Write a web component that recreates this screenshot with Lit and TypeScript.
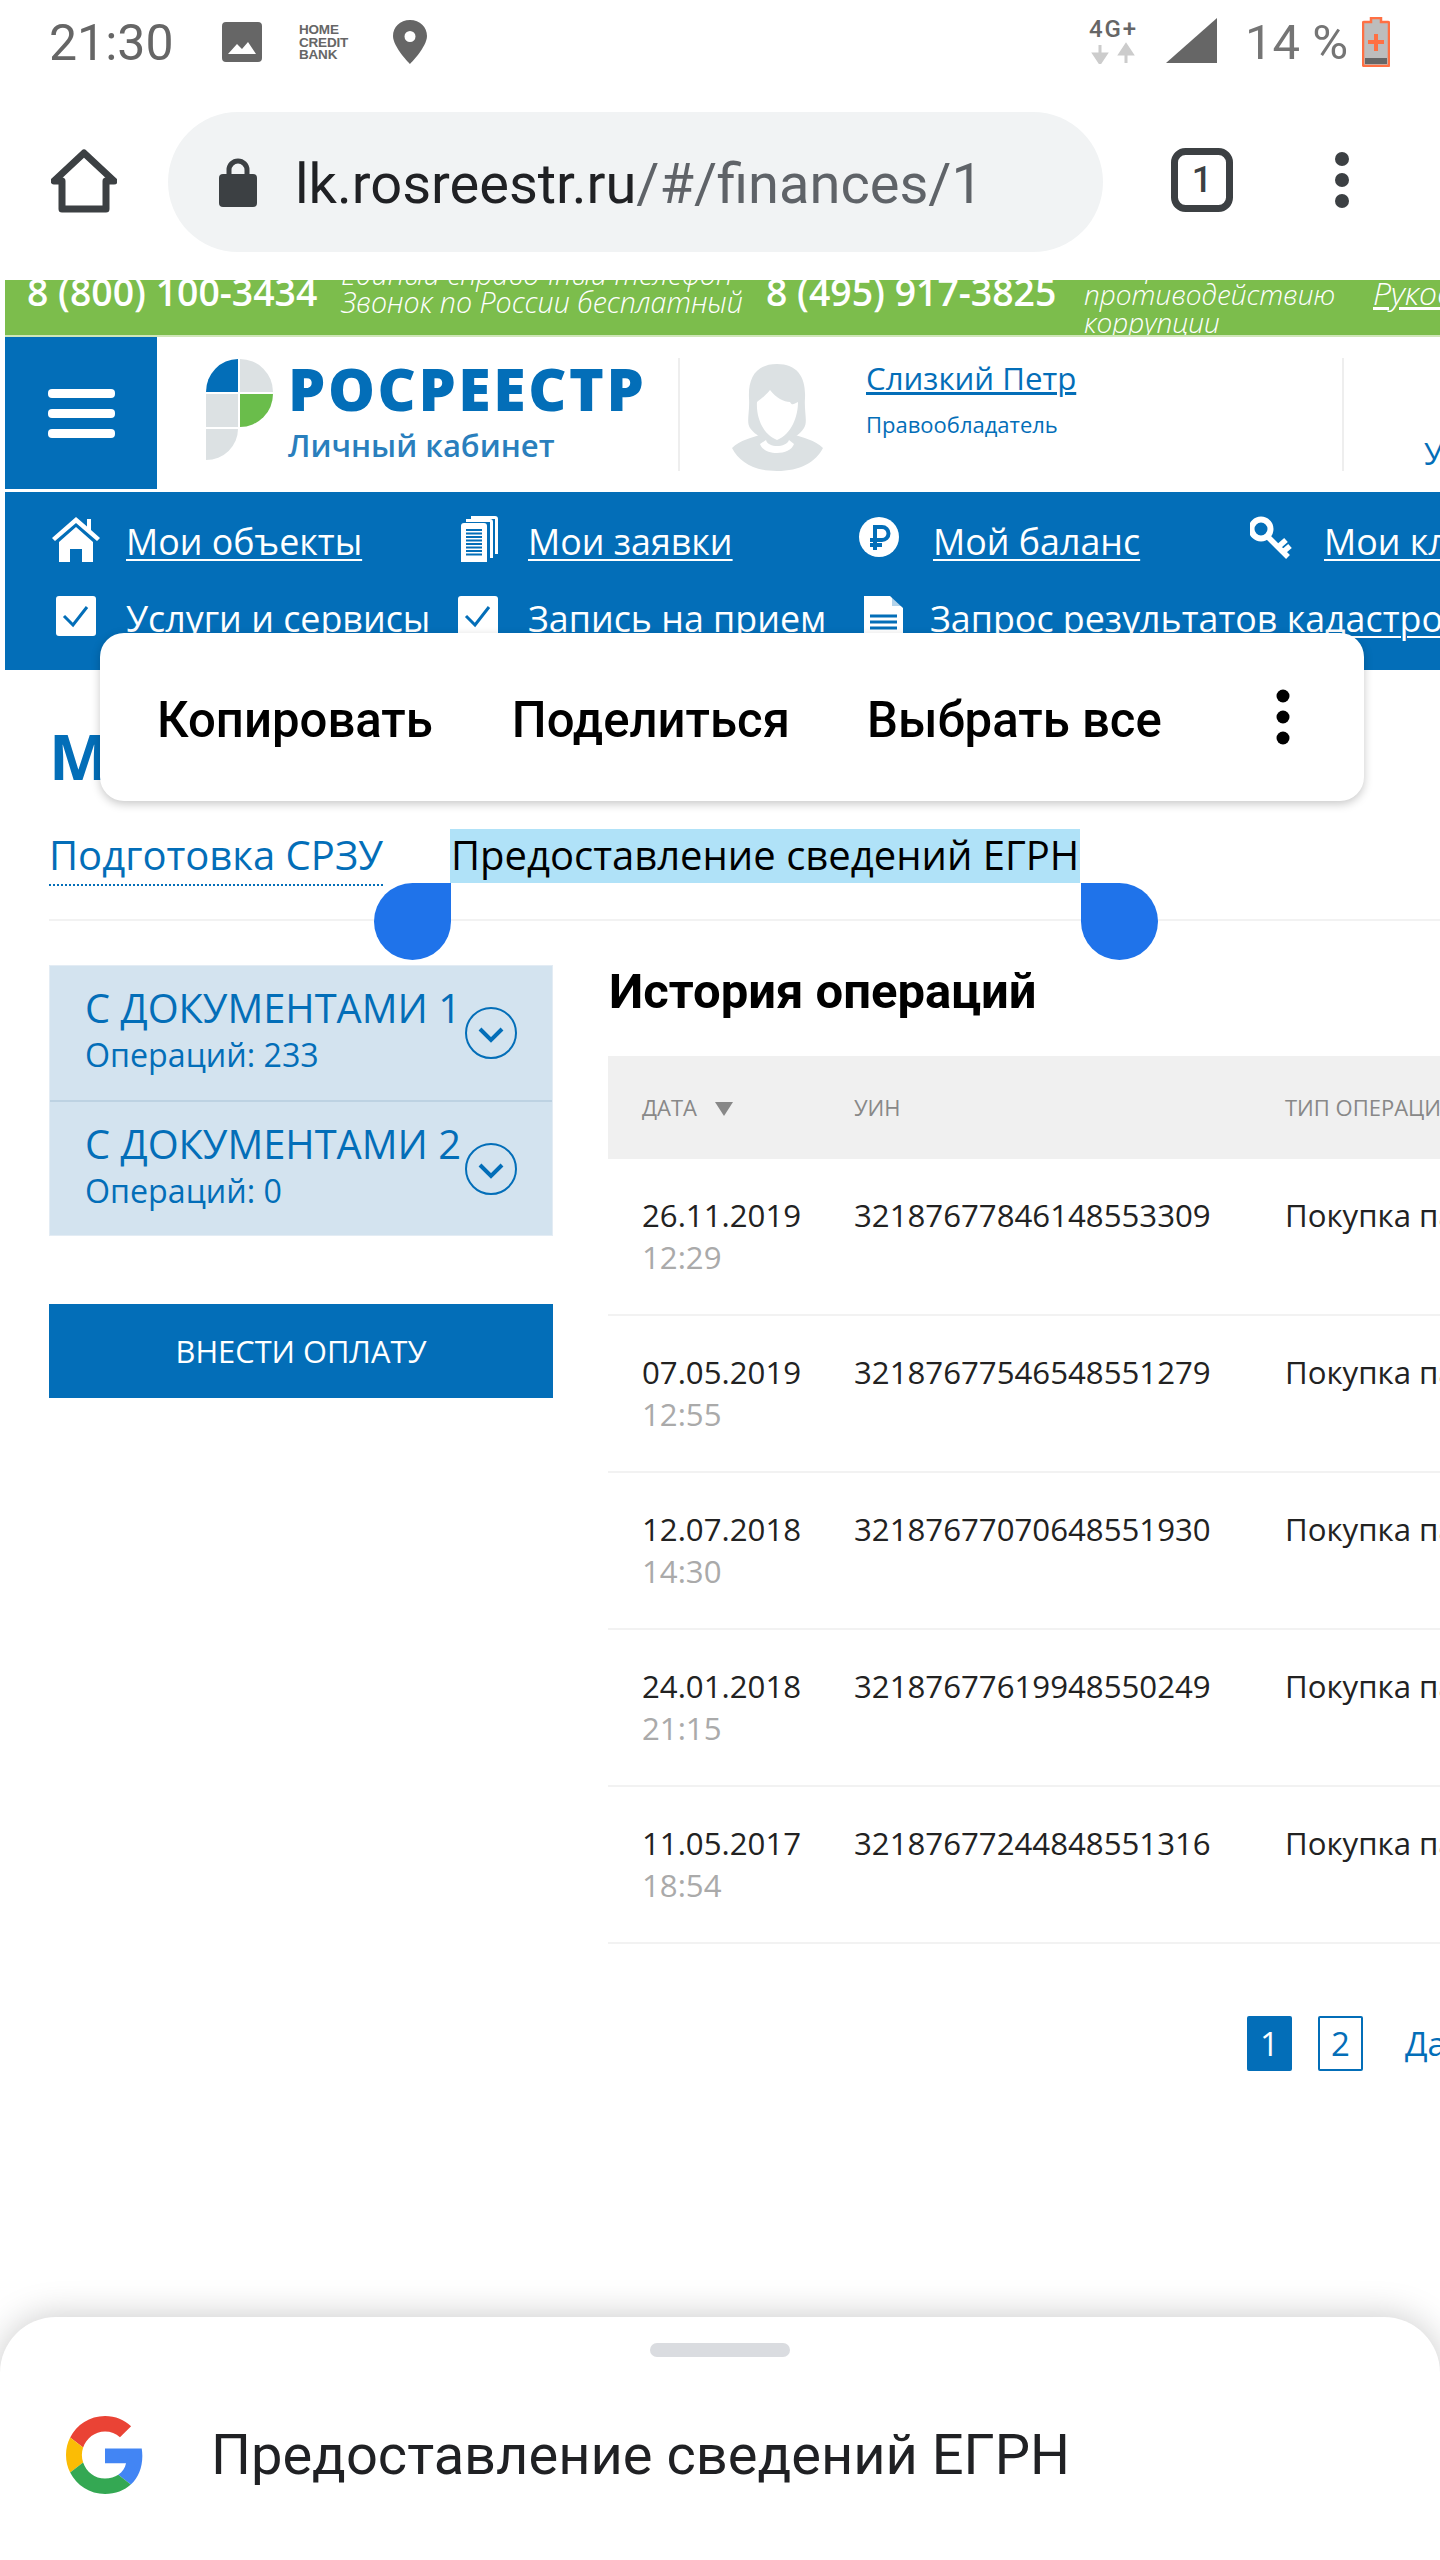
import { LitElement, html, css, svg } from "lit";
import { customElement } from "lit/decorators.js";

const rows = [
  ["26.11.2019", "12:29", "32187677846148553309"],
  ["07.05.2019", "12:55", "32187677546548551279"],
  ["12.07.2018", "14:30", "32187677070648551930"],
  ["24.01.2018", "21:15", "32187677619948550249"],
  ["11.05.2017", "18:54", "32187677244848551316"],
];

const icons = {
  house: svg`<svg class="nico" viewBox="0 0 48 48" width="48" height="48"><path d="M24 3 L0 24 L3 27 L24 9 L45 27 L48 24 L39 16 V5 H35 V12.5Z" fill="#fff"/><path d="M7 28 L24 13 L41 28 V48 H30 V35 H18 V48 H7Z" fill="#fff"/></svg>`,
  docs: svg`<svg class="nico" viewBox="0 0 48 48" width="48" height="48"><path d="M17 2 H41 a3 3 0 0 1 3 3 V40 H41 V5 H17Z M12 5 H36 a3 3 0 0 1 3 3 V44 H36 V8 H12Z" fill="#fff"/><rect x="7" y="9" width="26" height="41" rx="3" fill="#fff"/><path d="M12 16 H28 M12 19.500 H28 M12 23 H28 M12 26.500 H28 M12 30 H28 M12 33.500 H28 M12 37 H28 M12 40.500 H28" stroke="#036eb8" stroke-width="2"/></svg>`,
  ruble: svg`<svg class="nico" viewBox="0 0 48 48" width="48" height="48"><circle cx="20" cy="23" r="20" fill="#fff"/><path d="M16 36 V13 H23 a6.500 6.500 0 0 1 0 13 H11 M11 31 H23" fill="none" stroke="#036eb8" stroke-width="4"/></svg>`,
  key: svg`<svg class="nico" viewBox="0 0 48 48" width="48" height="48"><circle cx="11" cy="15" r="9.500" fill="none" stroke="#fff" stroke-width="6"/><path d="M18 23 L38 43 M28 33 L36 26 M33 38 L40 32" fill="none" stroke="#fff" stroke-width="5.500"/></svg>`,
  check: svg`<svg class="nico" viewBox="0 0 48 48" width="48" height="48"><rect x="4" y="0" width="40" height="40" rx="3" fill="#fff"/><path d="M12 20 L21 29 L35 11" fill="none" stroke="#036eb8" stroke-width="3"/></svg>`,
  doc: svg`<svg class="nico" viewBox="0 0 48 48" width="48" height="48"><path d="M5 0 H31 L44 12 V48 H5Z" fill="#fff"/><path d="M33 0 L44 10 H33Z" fill="#036eb8" opacity=".3"/><path d="M11 20 H38 M11 26 H38 M11 32 H38" stroke="#036eb8" stroke-width="3"/></svg>`,
};

const nav = [
  [icons.house, "Мои объекты"],
  [icons.docs, "Мои заявки"],
  [icons.ruble, "Мой баланс"],
  [icons.key, "Мои ключи"],
  [icons.check, "Услуги и сервисы"],
  [icons.check, "Запись на прием"],
  [icons.doc, "Запрос результатов кадастровой оценки"],
  [null, ""],
] as const;

@customElement("app-root")
export class AppRoot extends LitElement {
  static styles = css`
    :host { display: block; position: relative; width: 1440px; height: 2560px; overflow: hidden; background: #fff; font-family: "Open Sans", sans-serif; }
    a { color: inherit; }
    .status { height: 90px; display: flex; align-items: flex-start; color: #666; font-family: Roboto, sans-serif; }
    .time { font-size: 50px; line-height: 56px; margin: 15px 0 0 49px; width: 173px; flex: none; }
    .st-img { margin-top: 22px; flex: none; }
    .hcb { margin: 24px 0 0 37px; width: 94px; font: 700 13.5px/12.500px "Liberation Sans", sans-serif; flex: none; letter-spacing: -.2px; }
    .st-pin { margin-top: 20px; flex: none; }
    .st-right { margin-left: auto; display: flex; align-items: flex-start; }
    .net { margin-top: 18px; }
    .sig { margin: 18px 0 0 29px; }
    .pct { font-size: 49px; line-height: 56px; margin: 15px 0 0 28px; width: 117px; color: #757575; }
    .batt { margin: 17px 50px 0 0; }
    .toolbar { height: 190px; display: flex; align-items: flex-start; }
    .t-home { margin: 58px 0 0 51px; flex: none; }
    .pill { margin: 22px 0 0 51px; width: 935px; height: 140px; border-radius: 70px; background: #f1f3f4; display: flex; align-items: center; flex: none; }
    .lock { margin-left: 51px; flex: none; }
    .url { margin: 4px 0 0 38px; font: 400 56px/60px Roboto, sans-serif; color: #202124; white-space: nowrap; }
    .url span { color: #5f6368; }
    .t-tab { margin: 58px 0 0 68px; flex: none; }
    .t-dots { margin: 62px 0 0 101px; flex: none; }
    .page { padding-left: 5px; width: 1435px; overflow: hidden; }
    .green { height: 55px; background: #7cbd4c; overflow: hidden; display: flex; padding-left: 22px; color: #fff; border-bottom: 2px solid #cfe6b8; white-space: nowrap; }
    .phone { flex: none; font-size: 37.4px; font-weight: 600; line-height: 40px; margin-top: -8px; width: 314px; }
    .phone.second { width: 318px; }
    .note { flex: none; font-size: 28.6px; font-style: italic; font-weight: 300; line-height: 28px; margin-top: -20px; width: 425px; }
    .note.anti { font-size: 28px; margin-top: -28px; width: 289px; }
    .rk { flex: none; font-size: 32px; font-style: italic; font-weight: 300; line-height: 28px; margin-top: -1px; text-decoration: underline; }
    .header { display: flex; height: 155px; }
    .ham { flex: none; width: 152px; height: 152px; background: #036eb8; display: flex; flex-direction: column; gap: 11px; align-items: center; padding-top: 52px; box-sizing: border-box; }
    .ham i { display: block; width: 67px; height: 9px; border-radius: 4px; background: #fff; }
    .cell { flex: none; margin-top: 21px; height: 113px; display: flex; box-sizing: border-box; }
    .c-logo { width: 523px; padding-left: 49px; gap: 15px; border-right: 2px solid #eee; }
    .lg-svg { margin-top: 1px; flex: none; }
    .lg-a { font-size: 59px; font-weight: 800; line-height: 60px; color: #036eb8; letter-spacing: 2.6px; white-space: nowrap; }
    .lg-b { font-size: 31px; font-weight: 600; line-height: 34px; margin-top: 10px; color: #2a7fbd; white-space: nowrap; }
    .c-user { width: 664px; padding-left: 52px; gap: 43px; border-right: 2px solid #eee; color: #036eb8; }
    .av { margin-top: 6px; flex: none; }
    .nm { font-size: 31.200px; line-height: 40px; text-decoration: underline; white-space: nowrap; }
    .sub { font-size: 22px; line-height: 30px; margin-top: 11px; white-space: nowrap; }
    .c-more { padding: 75px 0 0 80px; font-size: 31px; line-height: 40px; color: #036eb8; white-space: nowrap; }
    .nav { height: 178px; background: #036eb8; padding: 11px 0 0 47px; box-sizing: border-box; display: grid; grid-template-columns: 402px 405px 391px 400px; grid-auto-rows: 77px; color: #fff; overflow: hidden; }
    .nitem { display: flex; gap: 26px; white-space: nowrap; font-size: 35.800px; line-height: 77px; }
    .nico { flex: none; margin-top: 11px; }
    .nitem:nth-child(n+5) .nico { margin-top: 16px; }
    .nitem:nth-child(7) { gap: 23px; }
    .nitem a { text-decoration: underline; text-underline-offset: 4px; text-decoration-thickness: 2px; }
    .main { padding-left: 44px; }
    h1 { margin: 36px 0 23px; font-size: 63px; font-weight: 700; line-height: 100px; color: #036eb8; white-space: nowrap; }
    .tabs { display: flex; height: 90px; border-bottom: 2px solid #f2f2f2; font-size: 40px; line-height: 52px; white-space: nowrap; }
    .tab { color: #036eb8; height: 55px; border-bottom: 2px dotted #036eb8; margin-right: 67px; }
    .sel { color: #000; background: #b0e2f8; height: 54px; padding: 0 1px; }
    .cols { display: flex; margin-top: 44px; gap: 55px; }
    .side { flex: none; width: 504px; }
    .acc { background: #d3e3ef; border: 1px solid #e3ecf4; box-sizing: border-box; height: 271px; overflow: hidden; }
    .acc-i { height: 136px; display: flex; padding-left: 35px; box-sizing: border-box; color: #036eb8; border-bottom: 2px solid #bdd2e2; white-space: nowrap; }
    .acc-i:last-child { border-bottom: 0; }
    .acc-t { flex: none; width: 380px; padding-top: 20px; }
    .acc-a { font-size: 39.800px; line-height: 44px; }
    .acc-b { font-size: 32.200px; line-height: 40px; margin-top: 5px; }
    .chev { flex: none; margin-top: 41px; }
    .pay { margin-top: 68px; height: 94px; background: #036eb8; color: #fff; font-size: 30.800px; display: flex; align-items: center; justify-content: center; }
    .hist { flex: none; width: 1100px; }
    h2 { margin: -3px 0 34px 1px; font: 700 49px/60px Roboto, sans-serif; color: #000; white-space: nowrap; }
    .thead { height: 103px; background: #f0f0f0; display: flex; align-items: center; color: #888; font-size: 22px; padding: 0 0 2px 34px; box-sizing: border-box; white-space: nowrap; }
    .c1 { flex: none; width: 212px; }
    .c2 { flex: none; width: 431px; }
    .tri { display: inline-block; width: 0; height: 0; margin-left: 18px; border-left: 9px solid transparent; border-right: 9px solid transparent; border-top: 14px solid #888; }
    .row { height: 157px; box-sizing: border-box; border-bottom: 2px solid #f2f2f2; padding: 35px 0 0 34px; display: flex; font-size: 31.200px; line-height: 42px; color: #222; white-space: nowrap; }
    .tm { color: #aaa; }
    .pager { display: flex; align-items: center; margin: 72px 0 0 639px; gap: 26px; font-size: 33px; color: #036eb8; }
    .pg { width: 45px; height: 55px; box-sizing: border-box; border: 2px solid #036eb8; border-radius: 2px; display: flex; align-items: center; justify-content: center; }
    .pg.on { background: #036eb8; color: #fff; }
    .next { margin-left: 16px; white-space: nowrap; }
    .popup { position: absolute; left: 100px; top: 633px; width: 1264px; height: 168px; background: #fff; border-radius: 24px; box-shadow: 0 3px 10px rgba(0,0,0,.22); display: flex; align-items: center; font: 500 49.100px/60px Roboto, sans-serif; color: #000; white-space: nowrap; }
    .popup span { position: relative; top: 3px; }
    .p1 { margin-left: 57px; }
    .p2 { margin-left: 79px; }
    .p3 { margin-left: 77px; }
    .pdots { position: absolute; left: 1175px; top: 56px; }
    .handle { position: absolute; top: 883px; width: 77px; height: 77px; background: #1f73ea; }
    .h-l { left: 374px; border-radius: 50% 0 50% 50%; }
    .h-r { left: 1081px; border-radius: 0 50% 50% 50%; }
    .sheet { position: absolute; left: 0; right: 0; top: 2317px; bottom: 0; background: #fff; border-radius: 56px 56px 0 0; box-shadow: 0 0 36px rgba(0,0,0,.22); }
    .grip { width: 140px; height: 14px; border-radius: 7px; background: #dadce0; margin: 26px auto 0; }
    .g-row { display: flex; align-items: flex-start; margin-top: 59px; }
    .g-logo { margin-left: 66px; flex: none; }
    .g-text { margin: 7px 0 0 67px; font: 400 56px/64px Roboto, sans-serif; color: #202124; white-space: nowrap; }
  `;

  render() {
    return html`
      <div class="status">
        <div class="time">21:30</div>
        <svg class="st-img" width="40" height="40" viewBox="0 0 40 40"><path d="M4 0 H36 a4 4 0 0 1 4 4 V36 a4 4 0 0 1 -4 4 H4 a4 4 0 0 1 -4 -4 V4 a4 4 0 0 1 4 -4Z M6 32 H34 L26 20 L20 27 L15 22Z" fill="#666" fill-rule="evenodd"/></svg>
        <div class="hcb">HOME<br />CREDIT<br />BANK</div>
        <svg class="st-pin" width="34" height="44" viewBox="0 0 34 44"><path d="M17 0 C7 0 0 7 0 16 C0 27 17 44 17 44 C17 44 34 27 34 16 C34 7 27 0 17 0Z M17 11 a5.500 5.500 0 1 1 0 11 a5.500 5.500 0 1 1 0 -11Z" fill="#666" fill-rule="evenodd"/></svg>
        <div class="st-right">
          <svg class="net" width="48" height="46" viewBox="0 0 48 46"><text x="0" y="19" font-family="Roboto, sans-serif" font-size="24" font-weight="500" fill="#666" textLength="47">4G+</text><path d="M11 27 V38 M5 36 L11 45 L17 36Z M37 45 V34 M31 36 L37 27 L43 36Z" stroke="#ccc" stroke-width="3" fill="#ccc"/></svg>
          <svg class="sig" width="51" height="45" viewBox="0 0 51 45"><path d="M51 0 V45 H0Z" fill="#666"/></svg>
          <div class="pct">14 %</div>
          <svg class="batt" width="28" height="50" viewBox="0 0 28 50"><path d="M9 1 H19 V5 H26 a1 1 0 0 1 1 1 V48 a1 1 0 0 1 -1 1 H2 a1 1 0 0 1 -1 -1 V6 a1 1 0 0 1 1 -1 H9Z" fill="#bdbdbd" stroke="#ff7043" stroke-width="2.500"/><rect x="3" y="41" width="22" height="6" fill="#666"/><path d="M14 17 V34 M6 25 H22" stroke="#ff7043" stroke-width="4"/></svg>
        </div>
      </div>
      <div class="toolbar">
        <svg class="t-home" width="66" height="66" viewBox="0 0 66 66"><path d="M33 5 L3 33 H11 V61 H55 V33 H63Z M33 5" fill="none" stroke="#3c4043" stroke-width="7" stroke-linejoin="round"/></svg>
        <div class="pill">
          <svg class="lock" width="38" height="50" viewBox="0 0 38 50"><path d="M10 18 V13 a9 9 0 0 1 18 0 V18" fill="none" stroke="#3c4043" stroke-width="5"/><rect x="0" y="17" width="38" height="33" rx="4" fill="#3c4043"/></svg>
          <div class="url">lk.rosreestr.ru<span>/#/finances/1</span></div>
        </div>
        <svg class="t-tab" width="62" height="64" viewBox="0 0 62 64"><rect x="3.500" y="3.500" width="55" height="57" rx="11" fill="none" stroke="#3c4043" stroke-width="7"/><text x="31" y="44" font-family="Roboto, sans-serif" font-size="36" font-weight="500" fill="#3c4043" text-anchor="middle">1</text></svg>
        <svg class="t-dots" width="16" height="56" viewBox="0 0 16 56"><circle cx="8" cy="7" r="7" fill="#3c4043"/><circle cx="8" cy="28" r="7" fill="#3c4043"/><circle cx="8" cy="49" r="7" fill="#3c4043"/></svg>
      </div>
      <div class="page">
        <div class="green">
          <div class="phone">8 (800) 100-3434</div>
          <div class="note">Единый справочный телефон<br />Звонок по России бесплатный</div>
          <div class="phone second">8 (495) 917-3825</div>
          <div class="note anti">Телефон по<br />противодействию<br />коррупции</div>
          <div class="rk">Руководство</div>
        </div>
        <div class="header">
          <div class="ham"><i></i><i></i><i></i></div>
          <div class="cell c-logo">
            <svg class="lg-svg" width="67" height="101" viewBox="0 0 67 101">
              <path d="M0 33 A32 33 0 0 1 32 0 V33Z" fill="#036eb8"/>
              <path d="M34 0 A33 33 0 0 1 67 33 H34Z" fill="#dce1e3"/>
              <rect x="0" y="35" width="32" height="33" fill="#dce1e3"/>
              <path d="M34 35 H67 A33 33 0 0 1 34 68Z" fill="#6abd4b"/>
              <path d="M0 70 H32 A32 31 0 0 1 0 101Z" fill="#dce1e3"/>
            </svg>
            <div><div class="lg-a">РОСРЕЕСТР</div><div class="lg-b">Личный кабинет</div></div>
          </div>
          <div class="cell c-user">
            <svg class="av" width="91" height="107" viewBox="0 0 91 107">
              <path d="M0 84 C8 76 20 74 30 70 H61 C71 74 83 76 91 84 C84 98 68 107 45 107 C22 107 7 98 0 84Z" fill="#dce1e3"/>
              <path d="M45 0 C24 0 16 14 17 34 C18 48 14 58 18 64 C22 70 30 74 34 76 L45 82 L57 76 C62 74 68 70 72 64 C76 58 72 48 73 34 C74 14 66 0 45 0Z" fill="#dce1e3"/>
              <path d="M38 26 C33 32 28 36 25 38 C24 52 30 70 45 76 C60 70 66 52 66 38 C62 40 60 42 58 38 C52 38 44 34 38 26Z" fill="#fff"/>
              <path d="M34 76 C36 84 54 84 57 76 L62 80 C58 92 32 92 28 80Z" fill="#fff"/>
            </svg>
            <div><div class="nm">Слизкий Петр</div><div class="sub">Правообладатель</div></div>
          </div>
          <div class="cell c-more">Уведомления</div>
        </div>
        <div class="nav">
          ${nav.map(([ic, label]) => html`<div class="nitem">${ic}<a>${label}</a></div>`)}
        </div>
        <div class="main">
          <h1>Мой баланс</h1>
          <div class="tabs">
            <div class="tab">Подготовка СРЗУ</div>
            <div class="sel">Предоставление сведений ЕГРН</div>
          </div>
          <div class="cols">
            <div class="side">
              <div class="acc">
                ${[["С ДОКУМЕНТАМИ 1", "Операций: 233"], ["С ДОКУМЕНТАМИ 2", "Операций: 0"]].map(([a, b]) => html`
                  <div class="acc-i">
                    <div class="acc-t"><div class="acc-a">${a}</div><div class="acc-b">${b}</div></div>
                    <svg class="chev" width="52" height="52" viewBox="0 0 52 52"><circle cx="26" cy="26" r="25" fill="none" stroke="#036eb8" stroke-width="2"/><path d="M15 22 L26 33 L37 22" fill="none" stroke="#036eb8" stroke-width="4"/></svg>
                  </div>`)}
              </div>
              <div class="pay">ВНЕСТИ ОПЛАТУ</div>
            </div>
            <div class="hist">
              <h2>История операций</h2>
              <div class="thead"><div class="c1">ДАТА<span class="tri"></span></div><div class="c2">УИН</div><div>ТИП ОПЕРАЦИИ</div></div>
              ${rows.map(([d, t, u]) => html`
                <div class="row">
                  <div class="c1">${d}<div class="tm">${t}</div></div>
                  <div class="c2">${u}</div>
                  <div>Покупка пакета</div>
                </div>`)}
              <div class="pager"><div class="pg on">1</div><div class="pg">2</div><div class="next">Дальше</div></div>
            </div>
          </div>
        </div>
      </div>
      <div class="popup">
        <span class="p1">Копировать</span><span class="p2">Поделиться</span><span class="p3">Выбрать все</span>
        <svg class="pdots" width="16" height="56" viewBox="0 0 16 56"><circle cx="8" cy="7" r="6.500" fill="#000"/><circle cx="8" cy="28" r="6.500" fill="#000"/><circle cx="8" cy="49" r="6.500" fill="#000"/></svg>
      </div>
      <div class="handle h-l"></div>
      <div class="handle h-r"></div>
      <div class="sheet">
        <div class="grip"></div>
        <div class="g-row">
          <svg class="g-logo" width="78" height="78" viewBox="0 0 48 48">
            <path fill="#EA4335" d="M24 9.500c3.540 0 6.710 1.220 9.210 3.600l6.850-6.850C35.900 2.380 30.470 0 24 0 14.620 0 6.510 5.380 2.560 13.220l7.980 6.190C12.430 13.720 17.740 9.500 24 9.500z"/>
            <path fill="#4285F4" d="M46.980 24.550c0-1.570-.15-3.090-.38-4.550H24v9.020h12.940c-.58 2.960-2.260 5.480-4.780 7.180l7.730 6c4.510-4.180 7.090-10.360 7.090-17.650z"/>
            <path fill="#FBBC05" d="M10.530 28.590c-.48-1.450-.76-2.990-.76-4.590s.27-3.140.76-4.590l-7.980-6.190C.92 16.460 0 20.120 0 24c0 3.880.92 7.540 2.560 10.780l7.970-6.190z"/>
            <path fill="#34A853" d="M24 48c6.480 0 11.930-2.130 15.890-5.810l-7.730-6c-2.150 1.450-4.920 2.300-8.160 2.300-6.260 0-11.570-4.220-13.470-9.910l-7.980 6.190C6.510 42.620 14.620 48 24 48z"/>
          </svg>
          <div class="g-text">Предоставление сведений ЕГРН</div>
        </div>
      </div>
    `;
  }
}
